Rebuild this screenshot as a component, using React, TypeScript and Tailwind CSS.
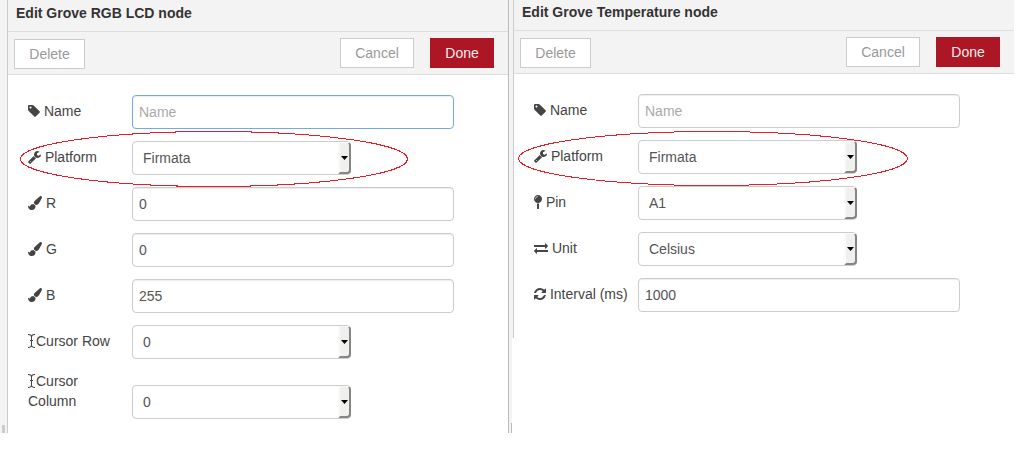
import type { ReactNode } from 'react';

type IconName = 'tag' | 'wrench' | 'brush' | 'pin' | 'exchange' | 'refresh' | 'cursor';

const ICONS: Record<IconName, { x: number; width: number; d: string }> = {
  tag: {
    x: 128,
    width: 1536,
    d: 'M576 448q0-53-37.5-90.5t-90.5-37.5-90.5 37.5-37.5 90.5 37.5 90.5 90.5 37.5 90.5-37.5 37.5-90.5zm1067 576q0 53-37 90l-491 492q-39 37-91 37-53 0-90-37l-715-716q-38-37-64.5-101t-26.5-117v-416q0-52 38-90t90-38h416q53 0 117 26.5t102 64.5l715 714q37 39 37 91z',
  },
  wrench: {
    x: 64,
    width: 1664,
    d: 'M448 1472q0-26-19-45t-45-19-45 19-19 45 19 45 45 19 45-19 19-45zm644-420l-682 682q-37 37-90 37-52 0-91-37l-106-108q-38-36-38-90 0-53 38-91l681-681q39 98 114.5 173.5t173.5 114.5zm634-435q0 39-23 106-47 134-164.5 217.5t-258.5 83.5q-185 0-316.5-131.5t-131.5-316.5 131.5-316.5 316.5-131.5q58 0 121.5 16.5t107.5 46.5q16 11 16 28t-16 28l-293 169v224l193 107q5-3 79-48.5t135.5-81 70.5-35.5q15 0 23.5 10t8.5 25z',
  },
  brush: {
    x: 0,
    width: 1792,
    d: 'M1615 0q70 0 122.5 46.5t52.5 116.5q0 63-45 151-332 629-465 752-97 91-218 91-126 0-216.5-92.5t-90.5-219.5q0-128 92-212l638-579q59-54 130-54zm-909 1034q39 76 106.5 130t150.5 76l1 71q4 213-129.5 347t-348.5 134q-123 0-218-46.5t-152.5-127.5-86.5-183-29-220q7 5 41 30t62 44.5 59 36.5 46 17q41 0 55-37 25-66 57.5-112.5t69.5-76 88-47.5 103-25.5 125-10.5z',
  },
  pin: {
    x: 384,
    width: 1024,
    d: 'M896 1088q66 0 128-15v655q0 26-19 45t-45 19h-128q-26 0-45-19t-19-45v-655q62 15 128 15zm0-1088q212 0 362 150t150 362-150 362-362 150-362-150-150-362 150-362 362-150zm0 224q14 0 23-9t9-23-9-23-23-9q-146 0-249 103t-103 249q0 14 9 23t23 9 23-9 9-23q0-119 84.5-203.5t203.5-84.5z',
  },
  exchange: {
    x: 0,
    width: 1792,
    d: 'M1792 1184v192q0 13-9.5 22.5t-22.5 9.5h-1376v192q0 13-9.5 22.5t-22.5 9.5q-12 0-24-10l-319-320q-9-9-9-22 0-14 9-23l320-320q9-9 23-9 13 0 22.5 9.5t9.5 22.5v192h1376q13 0 22.5 9.5t9.5 22.5zm0-544q0 14-9 23l-320 320q-9 9-23 9-13 0-22.5-9.5t-9.5-22.5v-192h-1376q-13 0-22.5-9.5t-9.5-22.5v-192q0-13 9.5-22.5t22.5-9.5h1376v-192q0-14 9-23t23-9q12 0 24 10l319 319q9 9 9 23z',
  },
  refresh: {
    x: 128,
    width: 1536,
    d: 'M1639 1056q0 5-1 7-64 268-268 434.5t-478 166.5q-146 0-282.5-55t-243.5-157l-129 129q-19 19-45 19t-45-19-19-45v-448q0-26 19-45t45-19h448q26 0 45 19t19 45-19 45l-137 137q71 66 161 102t187 36q134 0 250-65t186-179q11-17 53-117 8-23 30-23h192q13 0 22.5 9.5t9.5 22.5zm25-800v448q0 26-19 45t-45 19h-448q-26 0-45-19t-19-45 19-45l138-138q-148-137-349-137-134 0-250 65t-186 179q-11 17-53 117-8 23-30 23h-199q-13 0-22.5-9.5t-9.5-22.5v-7q65-268 270-434.5t480-166.5q146 0 284 55.5t245 156.5l130-129q19-19 45-19t45 19 19 45z',
  },
  cursor: {
    x: 384,
    width: 1024,
    d: 'M1216 128q-320 0-320 224v416h128v128h-128v544q0 224 320 224h64v128h-64q-272 0-384-146-112 146-384 146h-64v-128h64q320 0 320-224v-544h-128v-128h128v-416q0-224-320-224h-64v-128h64q272 0 384 146 112-146 384-146h64v128h-64z',
  },
};

function Icon({ name }: { name: IconName }) {
  const { x, width, d } = ICONS[name];
  return (
    <svg
      className="inline-block h-3.5 w-auto align-[-2px]"
      viewBox={`${x} 0 ${width} 1792`}
      width={width / 128}
      height={14}
      fill="currentColor"
      aria-hidden="true"
    >
      <path d={d} />
    </svg>
  );
}

function Row({ id, icon, label, children }: { id: string; icon: IconName; label: string; children: ReactNode }) {
  return (
    <div className="relative flex items-end gap-1">
      <label htmlFor={id} className="w-[100px] shrink-0 pb-2 leading-5 text-[#444]">
        <Icon name={icon} />
        {icon === 'cursor' ? '' : ' '}
        {label}
      </label>
      {children}
    </div>
  );
}

function TextField({ id, value, placeholder, active }: { id: string; value?: string; placeholder?: string; active?: boolean }) {
  return (
    <input
      id={id}
      type="text"
      defaultValue={value}
      placeholder={placeholder}
      className={`h-[34px] w-[70%] rounded border bg-white px-1.5 text-[#555] shadow-[inset_0_1px_1px_rgba(0,0,0,0.075)] outline-none placeholder:text-[#aaa] focus:border-[#75a8e6] ${
        active ? 'border-[#75a8e6]' : 'border-[#ccc]'
      }`}
    />
  );
}

function SelectField({ id, value }: { id: string; value: string }) {
  return (
    <div className="relative w-[219px]">
      <select
        id={id}
        defaultValue={value}
        className="block h-[34px] w-full appearance-none rounded border border-[#ccc] bg-white pr-4 pl-2.5 text-[#555] outline-none"
      >
        <option>{value}</option>
      </select>
      <span className="pointer-events-none absolute top-px right-0 bottom-px flex w-[13px] items-center justify-center rounded-r-sm border-t border-r-2 border-b-2 border-l-2 border-t-[#fafafa] border-r-[#858585] border-b-[#858585] border-l-[#fafafa] bg-[#f0f0ee]">
        <svg width="7" height="4" viewBox="0 0 7 4" aria-hidden="true">
          <path d="M0 0H7L3.5 4Z" fill="#000" />
        </svg>
      </span>
    </div>
  );
}

function Highlight({ className }: { className: string }) {
  return (
    <svg
      className={`pointer-events-none absolute overflow-visible ${className}`}
      viewBox="0 0 388 55"
      preserveAspectRatio="none"
      aria-hidden="true"
    >
      <ellipse
        cx="194"
        cy="27.5"
        rx="193.5"
        ry="27"
        fill="none"
        stroke="#ed1c24"
        strokeWidth="1"
        shapeRendering="crispEdges"
      />
    </svg>
  );
}

const BUTTON = 'h-[30px] border text-center leading-5';

function Editor({ title, titleClass, children }: { title: string; titleClass: string; children: ReactNode }) {
  return (
    <>
      <h2 className={`border-b border-[#ddd] bg-[#f3f3f3] pb-2 pl-2 leading-5 font-bold text-[#333] ${titleClass}`}>{title}</h2>
      <div className="flex h-[43px] items-start border-b border-[#ddd] bg-[#f3f3f3] pt-1.5 pr-3.5 pb-[5px] pl-1.5">
        <button type="button" className={`${BUTTON} mr-auto w-[71px] self-end border-[#ccc] bg-white text-[#999]`}>
          Delete
        </button>
        <button type="button" className={`${BUTTON} mr-4 w-[74px] border-[#ccc] bg-white text-[#999]`}>
          Cancel
        </button>
        <button type="button" className={`${BUTTON} w-16 border-[#ad1625] bg-[#ad1625] text-[#eee]`}>
          Done
        </button>
      </div>
      <form className="flex flex-col gap-3 px-5 pt-5">{children}</form>
    </>
  );
}

export default function App() {
  return (
    <main className="flex items-stretch bg-white pr-[13px] font-['Liberation_Sans',Arial,sans-serif] text-sm">
      <div className="flex w-2 shrink-0 flex-col justify-end border-r border-[#ccc] bg-[#f3f3f3] pl-0.5">
        <div className="h-2 w-[3px] bg-[#ccc]" />
      </div>

      <section className="min-w-0 flex-1 pb-3.5">
        <Editor title="Edit Grove RGB LCD node" titleClass="pt-[3px]">
          <Row id="lcd-name" icon="tag" label="Name">
            <TextField id="lcd-name" placeholder="Name" active />
          </Row>
          <Row id="lcd-platform" icon="wrench" label="Platform">
            <SelectField id="lcd-platform" value="Firmata" />
            <Highlight className="-top-2.5 -left-2 h-14 w-[388px]" />
          </Row>
          <Row id="lcd-r" icon="brush" label="R">
            <TextField id="lcd-r" value="0" />
          </Row>
          <Row id="lcd-g" icon="brush" label="G">
            <TextField id="lcd-g" value="0" />
          </Row>
          <Row id="lcd-b" icon="brush" label="B">
            <TextField id="lcd-b" value="255" />
          </Row>
          <Row id="lcd-row" icon="cursor" label="Cursor Row">
            <SelectField id="lcd-row" value="0" />
          </Row>
          <Row id="lcd-column" icon="cursor" label="Cursor Column">
            <SelectField id="lcd-column" value="0" />
          </Row>
        </Editor>
      </section>

      <div className="flex w-1 shrink-0 flex-col items-end justify-end border-l border-[#bbb] bg-[#f3f3f3]">
        <div className="h-2.5 w-px bg-[#bbb]" />
      </div>

      <div className="flex min-w-0 flex-[1_1_2px] self-start">
        <div className="w-0.5 shrink-0 border-r border-[#ccc] bg-[#f3f3f3]" />
        <section className="min-w-0 flex-1 pb-[26px]">
          <Editor title="Edit Grove Temperature node" titleClass="pt-0.5">
            <Row id="temp-name" icon="tag" label="Name">
              <TextField id="temp-name" placeholder="Name" />
            </Row>
            <Row id="temp-platform" icon="wrench" label="Platform">
              <SelectField id="temp-platform" value="Firmata" />
              <Highlight className="-top-[9px] -left-4 h-[55px] w-[390px]" />
            </Row>
            <Row id="temp-pin" icon="pin" label="Pin">
              <SelectField id="temp-pin" value="A1" />
            </Row>
            <Row id="temp-unit" icon="exchange" label="Unit">
              <SelectField id="temp-unit" value="Celsius" />
            </Row>
            <Row id="temp-interval" icon="refresh" label="Interval (ms)">
              <TextField id="temp-interval" value="1000" />
            </Row>
          </Editor>
        </section>
      </div>
    </main>
  );
}
